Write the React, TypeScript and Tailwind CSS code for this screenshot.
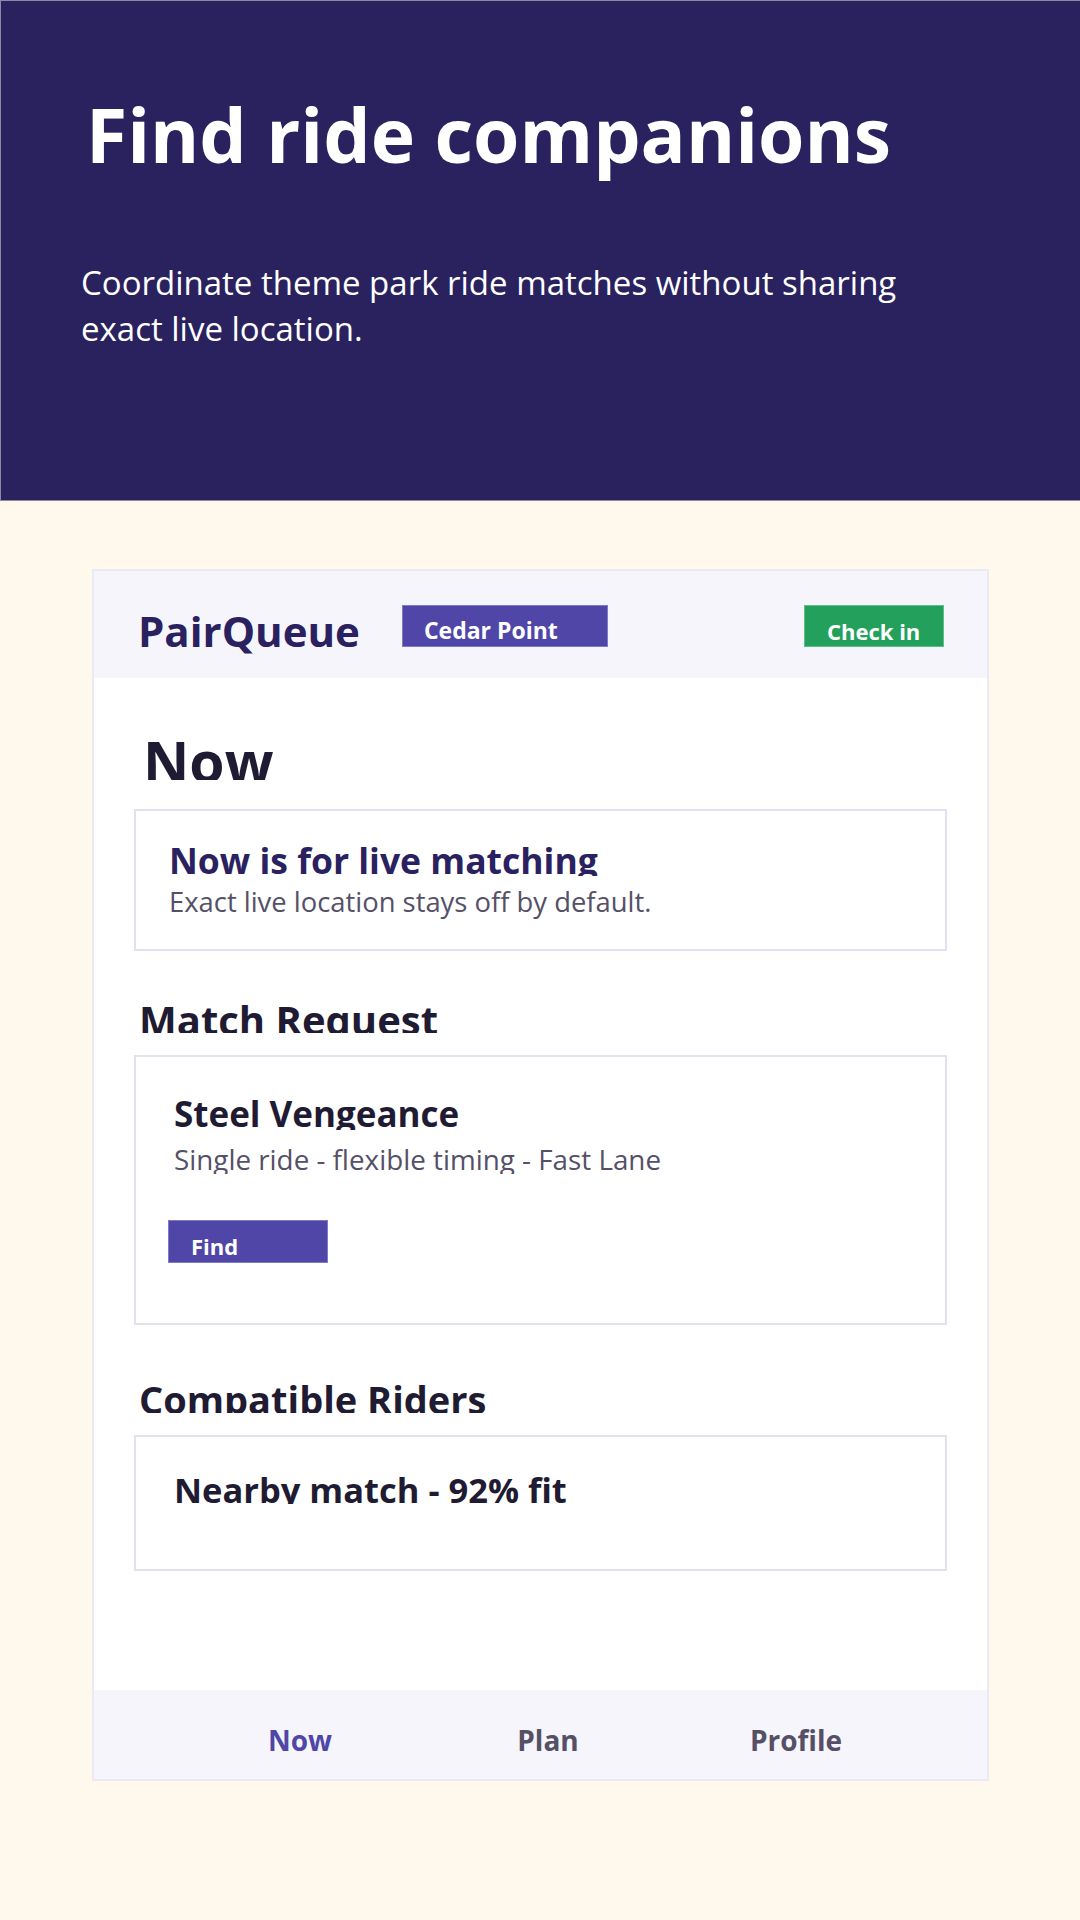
import React from 'react';

const navItems = [
  { label: 'Now', active: true },
  { label: 'Plan', active: false },
  { label: 'Profile', active: false },
];

export default function App() {
  return (
    <div className="min-h-[1920px] bg-[#fff8ec] font-['Open_Sans','Noto_Sans',sans-serif]">
      {/* Hero */}
      <header className="h-[501px] bg-[#2a225f] border-t border-l border-b border-[#8d89a4] pl-[80px] pt-[88px]">
        <h1 className="pl-[5px] text-[75px] leading-[90px] font-bold text-white">Find ride companions</h1>
        <p className="mt-[81px] max-w-[860px] text-[33px] leading-[46px] text-white">
          Coordinate theme park ride matches without sharing exact live location.
        </p>
      </header>

      <main className="pl-[92px] pt-[68px]">
        <div className="w-[897px] h-[1212px] bg-white border-2 border-[#ebe9f4] flex flex-col">
          {/* App bar */}
          <div className="h-[107px] bg-[#f6f5fb] flex items-start pl-[44px] pr-[43px] pt-[34px]">
            <span className="mt-[5px] text-[42px] leading-[42px] font-bold text-[#2a2260]">PairQueue</span>
            <button className="ml-[42px] w-[206px] h-[42px] bg-[#5046a8] border border-[#8079c6] pl-[21px] pt-[9px] text-left text-[23px] leading-[23px] font-bold text-white">
              Cedar Point
            </button>
            <button className="ml-auto w-[140px] h-[42px] bg-[#23a15c] border border-[#5fbf8a] pl-[22px] pt-[9px] text-left text-[22px] leading-[22px] font-bold text-white">
              Check in
            </button>
          </div>

          {/* Content */}
          <div className="flex-1 px-[40px]">
            <h2 className="mt-[55px] pl-[9px] h-[47px] overflow-hidden text-[57px] leading-[57px] font-bold text-[#1f1b33]">Now</h2>

            <div className="mt-[29px] h-[142px] border-2 border-[#e3e1ef] pl-[33px] pt-[32px]">
              <div className="h-[33px] overflow-hidden text-[35.5px] leading-[35.5px] font-bold text-[#2a2260]">
                Now is for live matching
              </div>
              <div className="mt-[8px] text-[27.4px] leading-[36px] text-[#555068]">
                Exact live location stays off by default.
              </div>
            </div>

            <h3 className="mt-[49px] pl-[5px] h-[33px] overflow-hidden text-[40px] leading-[40px] font-bold text-[#1f1b33]">
              Match Request
            </h3>

            <div className="mt-[22px] h-[270px] border-2 border-[#e3e1ef] pt-[39px]">
              <div className="pl-[38px] h-[34px] overflow-hidden text-[35px] leading-[35px] font-bold text-[#1f1b33]">Steel Vengeance</div>
              <div className="pl-[38px] mt-[16px] h-[28px] overflow-hidden text-[27.8px] leading-[27.8px] text-[#555068]">
                Single ride - flexible timing - Fast Lane
              </div>
              <button className="ml-[32px] mt-[46px] w-[160px] h-[43px] bg-[#5046a8] border border-[#8079c6] pl-[22px] pt-[9px] text-left text-[22px] leading-[22px] font-bold text-white">
                Find
              </button>
            </div>

            <h3 className="mt-[55px] pl-[5px] h-[33px] overflow-hidden text-[38px] leading-[38px] font-bold text-[#1f1b33]">
              Compatible Riders
            </h3>

            <div className="mt-[22px] h-[136px] border-2 border-[#e3e1ef] pl-[38px] pt-[36px]">
              <div className="h-[31px] overflow-hidden text-[34.5px] leading-[34.5px] font-bold text-[#1f1b33]">
                Nearby match - 92% fit
              </div>
            </div>
          </div>

          {/* Bottom nav */}
          <nav className="h-[89px] bg-[#f6f5fb] pl-[82px] pt-[36px] grid grid-cols-[248px_248px_248px]">
            {navItems.map((item) => (
              <span
                key={item.label}
                className={`text-center text-[28px] leading-[28px] font-bold ${item.active ? 'text-[#5046a8]' : 'text-[#555066]'}`}
              >
                {item.label}
              </span>
            ))}
          </nav>
        </div>
      </main>
    </div>
  );
}
